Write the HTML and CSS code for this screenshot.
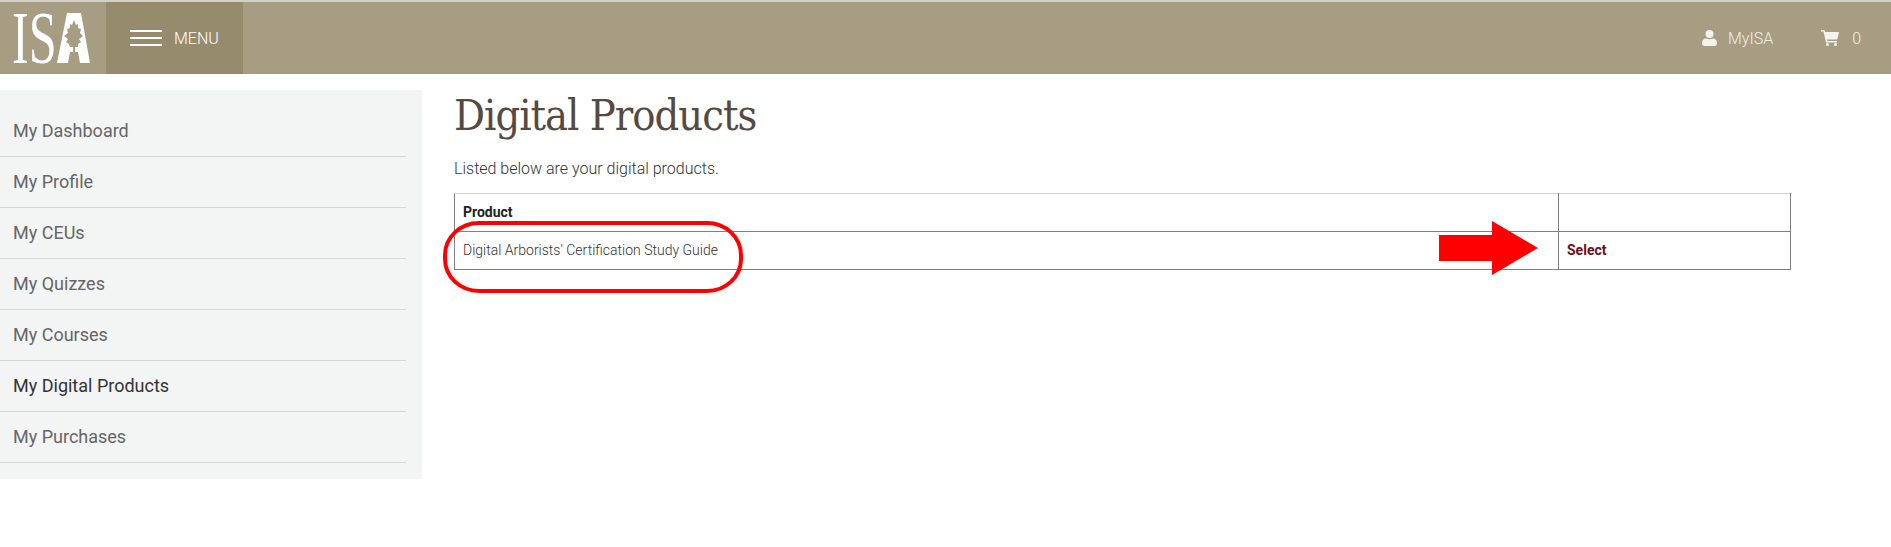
FILE: index.html
```html
<!DOCTYPE html>
<html lang="en">
<head>
    <meta charset="UTF-8">
    <meta name="viewport" content="width=device-width, initial-scale=1.0">
    <title>Digital Products</title>
    <link rel="stylesheet" href="styles.css">
</head>
<body>
    <header class="topbar">
        <a class="logo" href="#">
            <svg width="106" height="72" viewBox="0 0 106 72">
                <text class="logo-text" transform="translate(12 61) scale(0.68 1)">IS</text>
                <path class="logo-a" d="M67 11H81L90 61H80L78 50H75V45H78L78 42L81 40L79 37L83 34L80 31L81 27L78 26L78 22L76 23L74 18L72 23L70 22L70 26L67 27L68 31L64 34L68 37L66 40L69 42L70 45H73V50H70L68 61H57Z"/>
            </svg>
        </a>
        <a class="menu-toggle" href="#">
            <span class="burger"><span></span><span></span><span></span></span>
            MENU
        </a>
        <div class="topbar-right">
            <a class="top-link" href="#">
                <svg width="15" height="16" viewBox="0 0 15 16"><circle cx="7.5" cy="4" r="4"/><path d="M0 13.5C0 10 2 8.500 4 8.500C6 9.500 9 9.500 11 8.500C13 8.500 15 10 15 13.500C15 15 14 16 12.500 16H2.500C1 16 0 15 0 13.500Z"/></svg>
                MyISA
            </a>
            <a class="top-link cart" href="#">
                <svg width="18" height="16" viewBox="0 0 18 16"><path d="M0 0H3.500L4.200 2H18L16.200 9.500H6L6.400 11H16V12.500H5L2.500 1.500H0Z"/><circle cx="6.500" cy="14.500" r="1.500"/><circle cx="14.500" cy="14.500" r="1.500"/></svg>
                0
            </a>
        </div>
    </header>
    <div class="page">
        <aside class="sidebar">
            <ul>
                <li><a href="#">My Dashboard</a></li>
                <li><a href="#">My Profile</a></li>
                <li><a href="#">My CEUs</a></li>
                <li><a href="#">My Quizzes</a></li>
                <li><a href="#">My Courses</a></li>
                <li><a class="active" href="#">My Digital Products</a></li>
                <li><a href="#">My Purchases</a></li>
            </ul>
        </aside>
        <section class="content">
            <h1>Digital Products</h1>
            <p>Listed below are your digital products.</p>
            <table class="products">
                <tr>
                    <th>Product</th>
                    <th class="action-col"></th>
                </tr>
                <tr>
                    <td>Digital Arborists' Certification Study Guide</td>
                    <td><a href="#">Select</a></td>
                </tr>
            </table>
        </section>
    </div>
    <!-- annotations drawn over the screenshot -->
    <svg class="annotations" width="1891" height="547" viewBox="0 0 1891 547">
        <rect class="oval" x="445" y="223" width="296" height="68" rx="34" ry="32"/>
        <polygon class="arrow" points="1439,235 1492,235 1492,221 1538,248 1492,275 1492,261 1439,261"/>
    </svg>
</body>
</html>
```
FILE: styles.css
```css
/* Global Styles */
body {
    font-family: Roboto, sans-serif;
    background-color: #fff;
    color: #333;
    font-size: 16px;
    margin: 0;
    padding: 0;
}
a {
    text-decoration: none;
}
.topbar {
    display: flex;
    align-items: stretch;
    height: 72px;
    background-color: #a79d83;
    border-top: 2px solid #d3d0c8;
}
.logo {
    display: block;
    width: 106px;
}
.logo svg {
    display: block;
    overflow: visible;
}
.logo-text {
    font-family: "Liberation Serif", serif;
    font-size: 74px;
    fill: #fff;
}
.logo-a {
    fill: #fff;
}
.menu-toggle {
    display: flex;
    align-items: center;
    width: 137px;
    padding-left: 24px;
    box-sizing: border-box;
    background-color: #978b6d;
    color: #fff;
    font-size: 16px;
    font-weight: 300;
}
.burger {
    display: flex;
    flex-direction: column;
    gap: 5px;
    width: 32px;
    margin-right: 12px;
}
.burger span {
    display: block;
    height: 2px;
    background-color: #fff;
}
.topbar-right {
    display: flex;
    align-items: center;
    gap: 48px;
    margin-left: auto;
    padding-right: 30px;
}
.top-link {
    display: flex;
    align-items: center;
    gap: 11px;
    color: #f0ede7;
    font-size: 16px;
    font-weight: 300;
}
.top-link.cart {
    gap: 13px;
}
.top-link svg {
    fill: #f5f3ee;
}
.page {
    display: flex;
    align-items: flex-start;
    margin-top: 16px;
}
.sidebar {
    width: 422px;
    box-sizing: border-box;
    padding: 16px 16px 16px 0;
    background-color: #f3f4f4;
    flex-shrink: 0;
}
.sidebar ul {
    list-style: none;
    margin: 0;
    padding: 0;
}
.sidebar li {
    border-bottom: 1px solid #d5d6d6;
}
.sidebar a {
    display: block;
    height: 50px;
    line-height: 50px;
    padding-left: 13px;
    color: #666;
    font-size: 18px;
}
.sidebar a.active {
    color: #333;
}
.content {
    flex: 1;
    padding-left: 32px;
}
.content h1 {
    margin: 0;
    font-family: "DejaVu Serif Condensed", "DejaVu Serif", serif;
    font-size: 43px;
    font-weight: 400;
    letter-spacing: -1px;
    line-height: 50px;
    color: #554a42;
}
.content p {
    margin: 19px 0 0;
    font-weight: 300;
    line-height: 20px;
    color: #333;
}
.products {
    width: 1337px;
    margin-top: 14px;
    border-collapse: collapse;
    font-size: 14px;
}
.products th,
.products td {
    height: 35px;
    padding: 0 8px 2px;
    border: 1px solid #808080;
    text-align: left;
}
.products th {
    border-top-color: #d0d0d0;
    color: #222;
}
.products td {
    font-weight: 300;
    color: #333;
}
.products .action-col {
    width: 215px;
}
.products td a {
    color: #6b0f1a;
    font-weight: 700;
}
.annotations {
    position: absolute;
    left: 0;
    top: 0;
    pointer-events: none;
}
.oval {
    fill: none;
    stroke: #f00;
    stroke-width: 4;
}
.arrow {
    fill: #f00;
}
```
